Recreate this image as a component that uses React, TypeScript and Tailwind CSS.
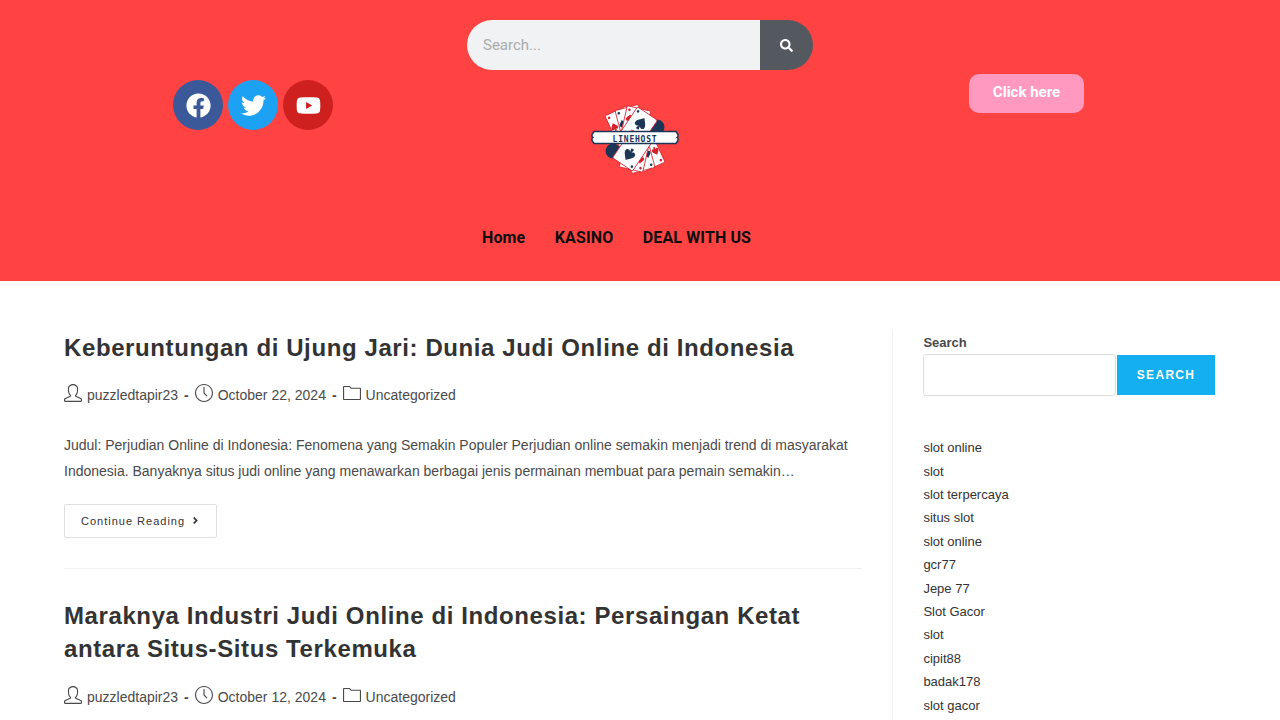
import { FaFacebook, FaTwitter, FaYoutube, FaSearch, FaAngleRight } from 'react-icons/fa';
import { SlUser, SlClock, SlFolder } from 'react-icons/sl';

const sidebarLinks = [
  'slot online', 'slot', 'slot terpercaya', 'situs slot', 'slot online', 'gcr77',
  'Jepe 77', 'Slot Gacor', 'slot', 'cipit88', 'badak178', 'slot gacor',
];

const SPADE = 'M0 -6c2 3 5 4.500 5 7.500 0 2.500-3 3-4.300 1l.8 3.500h-3l.8-3.500c-1.300 2-4.300 1.500-4.300-1 0-3 3-4.500 5-7.500z';

// one card of the fan, placed by its centre
const Card = ({ cx, cy, angle, pip, red, scale = 1 }: { cx: number; cy: number; angle: number; pip: [number, number]; red?: boolean; scale?: number }) => (
  <g transform={`translate(${cx} ${cy}) rotate(${angle})`}>
    <rect x="-12" y="-17" width="24" height="34" rx="1.500" fill="#fff" stroke="#d3222e" strokeWidth="0.8" />
    <circle cx="-9" cy="-13.500" r="1.300" fill={red ? '#d3222e' : '#1d3557'} />
    <path d={SPADE} transform={`translate(${pip[0]} ${pip[1]}) scale(${scale})`} fill={red ? '#d3222e' : '#1d3557'} />
  </g>
);

const Fan = () => (
  <>
    <Card cx={32} cy={22.3} angle={-25} pip={[-8, -3]} red scale={0.7} />
    <Card cx={40} cy={20} angle={-15} pip={[-8, -2]} scale={0.7} />
    <Card cx={44.200} cy={21} angle={13} pip={[-7, -5]} red scale={0.7} />
    <Card cx={47} cy={23.600} angle={34} pip={[0, -5]} scale={1.1} />
  </>
);

// Logo: fan of playing cards with a banner across it
const Logo = () => (
  <svg width="88" height="70" viewBox="0 0 88 70" className="block">
    <circle cx="66" cy="23" r="7.500" fill="#1d3557" />
    <circle cx="22" cy="47" r="7.500" fill="#1d3557" />
    <Fan />
    <g transform="rotate(180 44 35)"><Fan /></g>
    <path d="M3 27.500h82l2 3v2l-1 1 1 1v2l-2 3H3l-2-3v-2l1-1-1-1v-2z" fill="#fff" stroke="#1d3557" strokeWidth="1.500" />
    <text x="44" y="37.500" textAnchor="middle" fontFamily="'DejaVu Sans Mono', monospace" fontWeight="700" fontSize="8" letterSpacing="0.8" fill="#1d3557">LINEHOST</text>
  </svg>
);

const PostMeta = ({ date }: { date: string }) => (
  <div className="flex items-center text-[14px] leading-[20px] text-[#4a4a4a]">
    <SlUser className="text-[18px] text-[#4a4a4a] -mt-[4px]" />
    <span className="ml-[5px]">puzzledtapir23</span>
    <span className="mx-[6px] font-bold">-</span>
    <SlClock className="text-[18px] -mt-[4px]" />
    <span className="ml-[5px]">{date}</span>
    <span className="mx-[6px] font-bold">-</span>
    <SlFolder className="text-[18px] -mt-[4px]" />
    <span className="ml-[5px]">Uncategorized</span>
  </div>
);

export default function App() {
  return (
    <div className="h-[720px] overflow-hidden bg-white font-['Liberation_Sans',sans-serif]">
      {/* Header */}
      <header className="flex h-[281px] bg-[#ff4343] pl-[70px] font-['Roboto',sans-serif]">
        <div className="flex w-[366px] justify-center gap-[5px] pt-[80px]">
          <a className="flex h-[50px] w-[50px] items-center justify-center rounded-full bg-[#3b5998] text-[25px] text-white"><FaFacebook /></a>
          <a className="flex h-[50px] w-[50px] items-center justify-center rounded-full bg-[#1da1f2] text-[25px] text-white"><FaTwitter /></a>
          <a className="flex h-[50px] w-[50px] items-center justify-center rounded-full bg-[#cd201f] text-[25px] text-white"><FaYoutube /></a>
        </div>

        <div className="ml-[31px] w-[346px] pt-[20px]">
          <div className="flex h-[50px] overflow-hidden rounded-[25px]">
            <div className="flex flex-1 items-center bg-[#f0f2f4] pl-[16px] text-[15px] text-[#a9abae]">Search...</div>
            <button className="flex w-[53px] items-center justify-center bg-[#54595f] text-[13px] text-white"><FaSearch /></button>
          </div>
          <div className="ml-[124px] mt-[34px]"><Logo /></div>
          <nav className="ml-[15px] mt-[54px] flex gap-[29.5px] text-[16px] font-bold leading-[20px] tracking-[0.12px] text-[#0d0d0d]">
            <a>Home</a>
            <a>KASINO</a>
            <a>DEAL WITH US</a>
          </nav>
        </div>

        <div className="ml-[156px] pt-[74px]">
          <a className="flex h-[39px] w-[115px] items-center justify-center rounded-[10px] bg-[#ff99bf] pb-[2px] text-[15px] font-bold text-white">Click here</a>
        </div>
      </header>

      {/* Content */}
      <main className="flex pl-[64px] pt-[50px]">
        <div className="w-[798px] shrink-0">
          <article className="border-b border-[#f1f1f1] pb-[30px]">
            <h2 className="text-[24px] font-bold leading-[33.6px] tracking-[0.6px] text-[#333]">Keberuntungan di Ujung Jari: Dunia Judi Online di Indonesia</h2>
            <div className="mt-[20.4px]"><PostMeta date="October 22, 2024" /></div>
            <p className="mt-[27px] text-[14px] leading-[26px] text-[#4a4a4a]">
              Judul: Perjudian Online di Indonesia: Fenomena yang Semakin Populer Perjudian online semakin menjadi trend di masyarakat Indonesia. Banyaknya situs judi online yang menawarkan berbagai jenis permainan membuat para pemain semakin…
            </p>
            <a className="mt-[20px] flex h-[34px] w-[153px] items-center gap-[5px] rounded-[2px] border border-[#dfdfdf] pl-[16px] text-[11px] tracking-[1px] text-[#333]">
              Continue Reading <FaAngleRight className="text-[11px]" />
            </a>
          </article>
          <article className="pt-[30px]">
            <h2 className="text-[24px] font-bold leading-[33px] tracking-[0.6px] text-[#333]">Maraknya Industri Judi Online di Indonesia: Persaingan Ketat antara Situs-Situs Terkemuka</h2>
            <div className="mt-[21.6px]"><PostMeta date="October 12, 2024" /></div>
          </article>
        </div>

        <aside className="ml-[30px] h-[400px] w-[323px] border-l border-[#f1f1f1] pl-[30.4px]">
          <div className="pt-[1px] text-[13px] font-bold leading-[22px] text-[#4a4a4a]">Search</div>
          <div className="flex items-center gap-[1px]">
            <div className="h-[42px] w-[193px] rounded-[3px] border border-[#dddddd]" />
            <button className="flex h-[40px] w-[98px] items-center justify-center bg-[#13aff0] text-[12px] font-bold tracking-[1.3px] text-white">SEARCH</button>
          </div>
          <ul className="mt-[40.1px] text-[13px] leading-[23.4px] text-[#333]">
            {sidebarLinks.map((link, i) => (
              <li key={i}>{link}</li>
            ))}
          </ul>
        </aside>
      </main>
    </div>
  );
}
